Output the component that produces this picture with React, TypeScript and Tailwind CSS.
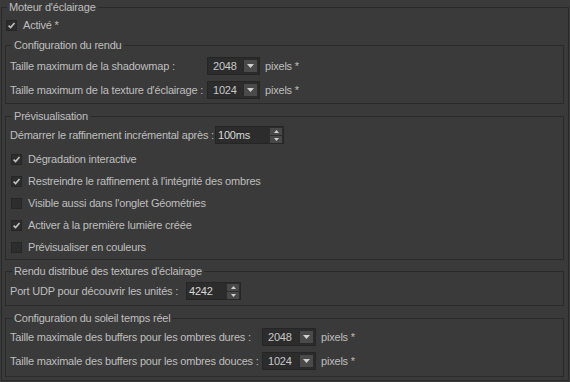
function Check({ checked }: { checked: boolean }) {
  return (
    <span className="flex h-[11px] w-[11px] shrink-0 items-center justify-center border border-[#262626] bg-[#2d2d2d]">
      {checked && (
        <svg width="9" height="9" viewBox="0 0 9 9">
          <path d="M1.6 4.6 L3.6 6.6 L7.5 2" fill="none" stroke="#c2c2c2" strokeWidth="1.6" />
        </svg>
      )}
    </span>
  );
}

function CheckRow({ checked, label }: { checked: boolean; label: string }) {
  return (
    <div className="flex h-[22px] items-center gap-[6px] pl-[1px]">
      <Check checked={checked} />
      <span>{label}</span>
    </div>
  );
}

function Combo({ value, width }: { value: string; width: string }) {
  return (
    <div className={`flex h-[18px] items-center justify-between border border-[#252525] bg-[#2c2c2c] pl-[5px] pr-[1px] ${width}`}>
      <span className="text-[#c8c8c8]">{value}</span>
      <span className="flex h-[14px] w-[15px] items-center justify-center border border-[#2a2a2a] bg-[#4a4a4a]">
        <svg width="7" height="4" viewBox="0 0 7 4">
          <path d="M0 0 H7 L3.5 4 Z" fill="#d0d0d0" />
        </svg>
      </span>
    </div>
  );
}

function Spin({ value, width }: { value: string; width: string }) {
  return (
    <div className={`flex h-[18px] items-center justify-between border border-[#252525] bg-[#2c2c2c] pl-[2px] pr-[1px] ${width}`}>
      <span className="text-[#d8d8d8]">{value}</span>
      <span className="flex flex-col gap-[1px]">
        <span className="flex h-[7px] w-[12px] items-center justify-center bg-[#484848]">
          <svg width="5" height="3" viewBox="0 0 5 3">
            <path d="M0 3 H5 L2.5 0 Z" fill="#d0d0d0" />
          </svg>
        </span>
        <span className="flex h-[7px] w-[12px] items-center justify-center bg-[#484848]">
          <svg width="5" height="3" viewBox="0 0 5 3">
            <path d="M0 0 H5 L2.5 3 Z" fill="#d0d0d0" />
          </svg>
        </span>
      </span>
    </div>
  );
}

function ComboRow({ label, labelWidth, value, comboWidth }: { label: string; labelWidth: string; value: string; comboWidth: string }) {
  return (
    <div className="flex h-[18px] items-center">
      <span className={`shrink-0 ${labelWidth}`}>{label}</span>
      <Combo value={value} width={comboWidth} />
      <span className="ml-[5px]">pixels *</span>
    </div>
  );
}

export default function App() {
  return (
    <div className="h-[382px] w-[570px] overflow-hidden bg-[#3a3a3a] px-px font-['Liberation_Sans',Arial,sans-serif] text-[11px] leading-[14px] tracking-[-0.2px] text-[#bfbfbf]">
      <fieldset className="h-[381px] border border-[#2a2a2a] pb-[3px] pl-[3px] pr-[4px]">
        <legend className="ml-[2px] px-[2px]">Moteur d'éclairage</legend>
        <div className="flex h-[22px] items-center gap-[6px] pl-[1px]">
          <Check checked />
          <span>Activé *</span>
        </div>

        <fieldset className="mt-[2px] border border-[#2a2a2a] pb-[4px] pl-[4px] pt-[5px]">
          <legend className="ml-[2px] px-[2px]">Configuration du rendu</legend>
          <div className="flex flex-col gap-[6px]">
            <ComboRow label="Taille maximum de la shadowmap :" labelWidth="w-[197px]" value="2048" comboWidth="w-[53px]" />
            <ComboRow label="Taille maximum de la texture d'éclairage :" labelWidth="w-[197px]" value="1024" comboWidth="w-[53px]" />
          </div>
        </fieldset>

        <fieldset className="mt-[5px] border border-[#2a2a2a] pb-[1px] pl-[4px] pt-[3px]">
          <legend className="ml-[2px] px-[2px]">Prévisualisation</legend>
          <div className="flex h-[18px] items-center">
            <span className="w-[205px] shrink-0">Démarrer le raffinement incrémental après :</span>
            <Spin value="100ms" width="w-[69px]" />
          </div>
          <div className="mt-[4px] flex flex-col">
            <CheckRow checked label="Dégradation interactive" />
            <CheckRow checked label="Restreindre le raffinement à l'intégrité des ombres" />
            <CheckRow checked={false} label="Visible aussi dans l'onglet Géométries" />
            <CheckRow checked label="Activer à la première lumière créée" />
            <CheckRow checked={false} label="Prévisualiser en couleurs" />
          </div>
        </fieldset>

        <fieldset className="mt-[4px] border border-[#2a2a2a] pb-[5px] pl-[4px] pt-[4px]">
          <legend className="ml-[2px] px-[2px]">Rendu distribué des textures d'éclairage</legend>
          <div className="flex h-[18px] items-center">
            <span className="w-[176px] shrink-0">Port UDP pour découvrir les unités :</span>
            <Spin value="4242" width="w-[55px]" />
          </div>
        </fieldset>

        <fieldset className="mt-[5px] border border-[#2a2a2a] pb-[6px] pl-[4px] pt-[3px]">
          <legend className="ml-[2px] px-[2px]">Configuration du soleil temps réel</legend>
          <div className="flex flex-col gap-[6px]">
            <ComboRow label="Taille maximale des buffers pour les ombres dures :" labelWidth="w-[252px]" value="2048" comboWidth="w-[54px]" />
            <ComboRow label="Taille maximale des buffers pour les ombres douces :" labelWidth="w-[252px]" value="1024" comboWidth="w-[54px]" />
          </div>
        </fieldset>
      </fieldset>
    </div>
  );
}
